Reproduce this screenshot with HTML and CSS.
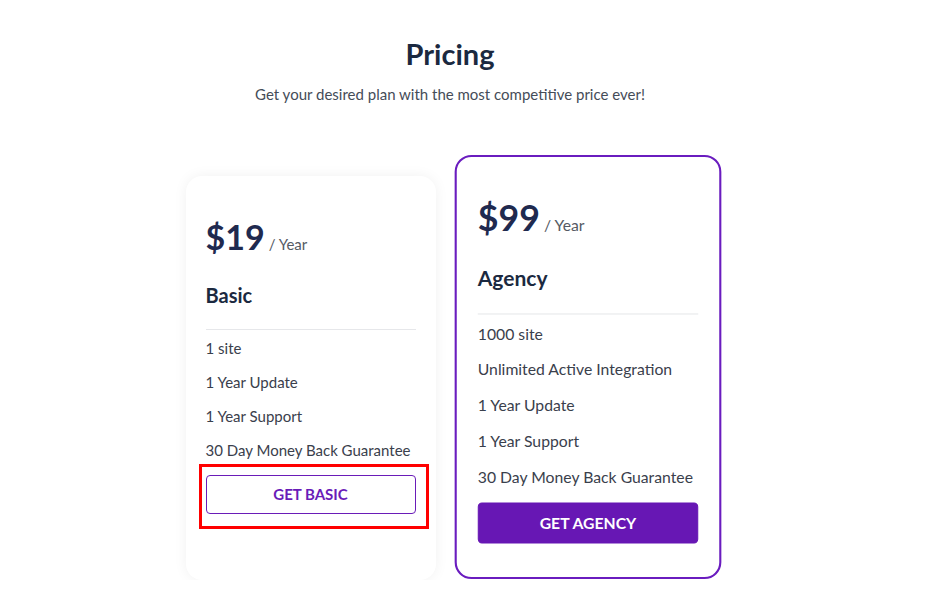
FILE: index.html
```html
<!DOCTYPE html>
<html lang="en">
<head>
<meta charset="utf-8">
<title>Pricing</title>
<link rel="stylesheet" href="styles.css">
</head>
<body>
<main class="page">
  <header class="intro">
    <h1 class="title">Pricing</h1>
    <p class="subtitle">Get your desired plan with the most competitive price ever!</p>
  </header>
  <section class="plans">
    <article class="plan">
      <div class="price"><span class="amount">$19</span><span class="period">/ Year</span></div>
      <h2 class="plan-name">Basic</h2>
      <ul class="features">
        <li>1 site</li>
        <li>1 Year Update</li>
        <li>1 Year Support</li>
        <li>30 Day Money Back Guarantee</li>
      </ul>
      <div class="cta-wrap">
        <button class="cta cta-outline">GET BASIC</button>
        <span class="annotation"></span>
      </div>
    </article>
    <article class="plan plan-featured">
      <div class="price"><span class="amount">$99</span><span class="period">/ Year</span></div>
      <h2 class="plan-name">Agency</h2>
      <ul class="features">
        <li>1000 site</li>
        <li>Unlimited Active Integration</li>
        <li>1 Year Update</li>
        <li>1 Year Support</li>
        <li>30 Day Money Back Guarantee</li>
      </ul>
      <div class="cta-wrap">
        <button class="cta cta-solid">GET AGENCY</button>
      </div>
    </article>
  </section>
</main>
</body>
</html>
```

FILE: styles.css
```css
* { box-sizing: border-box; }

html, body {
  margin: 0;
  padding: 0;
  background: #ffffff;
}

body {
  font-family: "Lato", "Liberation Sans", sans-serif;
  color: #3a404c;
}

.page {
  width: 900px;
  padding-top: 37px;
}

.intro {
  text-align: center;
}

.title {
  margin: 0;
  font-size: 29px;
  line-height: 1.2;
  font-weight: 700;
  color: #1b2940;
}

.subtitle {
  margin: 13px 0 0;
  font-size: 15px;
  line-height: 18px;
  color: #454c58;
}

.plans {
  display: flex;
  justify-content: center;
  align-items: stretch;
  gap: 25px;
  margin-top: 73px;
}

.plan {
  width: 250px;
  background: #ffffff;
  border: 2px solid transparent;
  border-radius: 16px;
  padding: 39px 18px 30px;
  box-shadow: 0 0 14px rgba(0, 0, 0, 0.06);
}

.plan-featured {
  width: 254px;
  padding: 37px 20px 32px;
  border-color: #6a1cbf;
  box-shadow: none;
  transform: translateY(-11px) scale(1.05);
}

.price {
  display: flex;
  align-items: baseline;
  gap: 4px;
  line-height: 1.2;
}

.amount {
  font-size: 34px;
  font-weight: 700;
  color: #1f2a4f;
}

.period {
  font-size: 15px;
  color: #555a64;
}

.plan-name {
  margin: 25px 0 0;
  font-size: 20px;
  line-height: 24px;
  font-weight: 700;
  color: #1b2940;
  padding-bottom: 22px;
  border-bottom: 1px solid #e6e7ea;
}

.features {
  list-style: none;
  margin: 1px 0 0;
  padding: 0;
}

.features li {
  font-size: 15px;
  line-height: 34px;
  color: #3a404c;
  white-space: nowrap;
}

.cta-wrap {
  position: relative;
  margin-top: 8px;
}

.cta {
  display: block;
  width: 100%;
  height: 39px;
  border-radius: 4px;
  font-family: "Lato", "Liberation Sans", sans-serif;
  font-size: 15px;
  font-weight: 700;
  cursor: pointer;
}

.cta-outline {
  background: #ffffff;
  border: 1px solid #6a1cb8;
  color: #6a1cb8;
}

.cta-solid {
  background: #6717b4;
  border: 1px solid #6717b4;
  color: #ffffff;
}

.annotation {
  position: absolute;
  top: -11px;
  left: -7px;
  right: -13px;
  bottom: -15px;
  border: 3px solid #ff0000;
  pointer-events: none;
}
```
